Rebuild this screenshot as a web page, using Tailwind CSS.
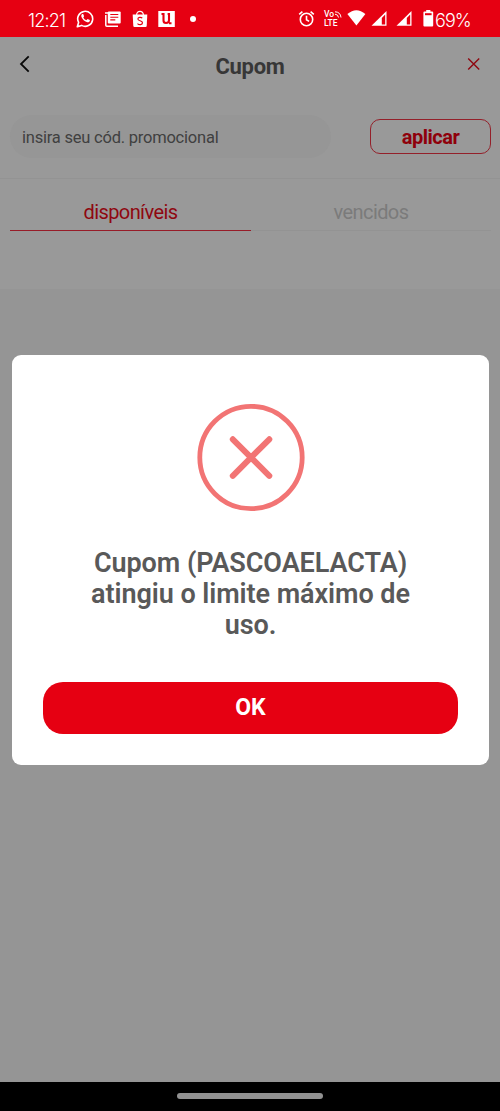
<!DOCTYPE html>
<html lang="pt-BR">
<head>
<meta charset="utf-8">
<title>Cupom</title>
<script src="https://cdn.jsdelivr.net/npm/@tailwindcss/browser@4"></script>
</head>
<body class="bg-[#959595]">
<div class="relative flex flex-col w-[500px] h-[1111px] overflow-hidden bg-[#959595] font-['Roboto',sans-serif]">
  <header class="h-[37px] shrink-0 bg-[#e60012] flex text-white">
    <span class="ml-[28px] mt-[8px] w-[40px] text-[18px] leading-[25px] font-light tracking-[-0.8px] whitespace-nowrap font-['Inter',sans-serif]">12:21</span>
    <svg class="ml-[8px] mt-[9px] w-[19px] h-[19px] shrink-0" viewBox="0 0 19 19" fill="none"><path d="M1.3 17.7l1.3-4.3A7.5 7.5 0 1 1 5.6 16.4z" stroke="#fff" stroke-width="1.6" stroke-linejoin="round"/><path d="M6.3 5.1c-1 .6-1.3 1.800-.7 3.100 1 2.300 2.800 4 5.100 4.900 1.400.5 2.700 0 3.100-1.200l.1-.8-2.300-1.100-1.300 1.200c-1.300-.6-2.300-1.500-3-2.800l.8-1.200-.9-2.200z" fill="#fff"/></svg>
    <svg class="ml-[10px] mt-[11px] w-[16px] h-[16px] shrink-0" viewBox="0 0 16 16"><path d="M.8 4v10.200q0 1 1 1H13M0 2h3" fill="none" stroke="#fff" stroke-width="1.500"/><rect x="2.800" y=".5" width="12.900" height="12" rx="1" fill="#fff"/><path d="M5.300 3.500h8M5.300 6.200h8M5.300 8.900h5" stroke="#e60012" stroke-width="1.100"/></svg>
    <svg class="ml-[11px] mt-[10px] w-[16px] h-[18px] shrink-0" viewBox="0 0 16 18"><path d="M4.600 5C4.600 .2 11.400 .2 11.400 5" fill="none" stroke="#fff" stroke-width="1.200"/><path d="M.7 4.500h14.600l-.6 11.500q-.1 1-1.100 1H2.400q-1 0-1.100-1z" fill="#fff"/><path d="M10.300 8.200C9 6.900 5.900 7.100 5.900 9c0 2.200 4.600 1.400 4.600 3.800 0 2.200-3.500 2.300-5 .8" fill="none" stroke="#e60012" stroke-width="1.200"/></svg>
    <svg class="ml-[10px] mt-[11px] w-[17px] h-[16px] shrink-0" viewBox="0 0 17 16"><rect x=".3" width="16.500" height="16" fill="#fff"/><path d="M3.500 3H6M9.600 3H12M5.500 2v7.500q0 2.500 2.500 2.500 3 0 3-2.700V2M11 12.200h2.500" fill="none" stroke="#e60012" stroke-width="2.100"/></svg>
    <span class="ml-[15px] mt-[16px] w-[6px] h-[6px] rounded-full bg-white shrink-0"></span>
    <svg class="ml-[102px] mt-[10px] w-[17px] h-[17px] shrink-0" viewBox="0 0 17 17" fill="none" stroke="#fff" stroke-width="1.600"><circle cx="8.500" cy="9.500" r="6.200"/><path d="M8.500 5.800v4l2.600 1.600M1.200 4.300l3.200-2.700M15.800 4.300l-3.200-2.700"/></svg>
    <div class="ml-[9px] mt-[11px] w-[18px] shrink-0 flex flex-col text-[8.500px] leading-[8px] font-medium">
      <div class="flex h-[7px]"><span class="w-[11px] tracking-[-0.1px] leading-[7px]">Vo</span><svg class="w-[7px] h-[7px]" viewBox="0 0 7 7" fill="none" stroke="#fff"><path d="M0 .8q5.500.2 6 5.700M0 3.200q3.200.2 3.500 3.300"/></svg></div>
      <span class="h-[9px] leading-[10px]">LTE</span>
    </div>
    <svg class="ml-[5px] mt-[10px] w-[19px] h-[16px] shrink-0" viewBox="0 0 19 16"><path d="M.4 4.100Q9.400-3.600 18.400 4.100L9.400 15.500z" fill="#fff"/></svg>
    <svg class="ml-[5px] mt-[11px] w-[16px] h-[15px] shrink-0" viewBox="0 0 16 15"><path d="M15.500 0v14.700H.5z" fill="#fff"/><path d="M14.200 3.500v10h-3.400V7z" fill="#e60012"/></svg>
    <svg class="ml-[9px] mt-[11px] w-[16px] h-[15px] shrink-0" viewBox="0 0 16 15"><path d="M15.500 0v14.700H.5z" fill="#fff"/><path d="M14.200 3.500v10h-3.400V7z" fill="#e60012"/></svg>
    <svg class="ml-[11px] mt-[10px] w-[11px] h-[17px] shrink-0" viewBox="0 0 11 17"><path d="M3.200 0h4.200v1.500h1.800q1 0 1 1v13q0 1-1 1H1.400q-1 0-1-1v-13q0-1 1-1h1.800z" fill="#fff"/><path d="M2 3.200h6.600v2H2z" fill="#e60012"/></svg>
    <span class="ml-[1px] mt-[8px] text-[18px] leading-[25px] font-light tracking-[-0.9px] whitespace-nowrap font-['Inter',sans-serif]">69%</span>
  </header>

  <main class="h-[252px] shrink-0 bg-[#999999] flex flex-col">
    <div class="h-[60px] grid grid-cols-[60px_1fr_60px]">
      <svg class="ml-[18px] mt-[18px] w-[14px] h-[18px]" viewBox="0 0 14 18" fill="none" stroke="#080808" stroke-width="1.800"><path d="M10.700 1.400L3 9l7.700 7.700"/></svg>
      <h1 class="text-center text-[22px] leading-[60px] font-bold tracking-[-0.3px] text-[#373737]">Cupom</h1>
      <svg class="ml-[27px] mt-[20px] w-[14px] h-[14px]" viewBox="0 0 14 14" fill="none" stroke="#8f0710" stroke-width="1.400"><path d="M1.200 1.500l11 11M12.200 1.500l-11 11"/></svg>
    </div>
    <div class="h-[82px] border-b border-[#939393] flex justify-between pl-[10px] pr-[9px]">
      <div class="mt-[18px] w-[321px] h-[43px] rounded-full bg-[#969696] pl-[12px] text-[16.500px] leading-[45px] tracking-[-0.22px] text-[#404040]">insira seu cód. promocional</div>
      <button class="mt-[22px] w-[121px] h-[35px] rounded-[10px] border border-[#94202a] text-[20px] leading-[32px] font-bold tracking-[-0.5px] text-[#8f000b]">aplicar</button>
    </div>
    <nav class="ml-[10px] h-[52px] grid grid-cols-[241px_1fr] text-center text-[20px] leading-[66px] tracking-[-0.6px] mr-[9px]">
      <div class="h-[52px] border-b border-[#971c28] text-[#8f0710]">disponíveis</div>
      <div class="h-[52px] border-b border-[#939393] text-[#7b7b7b]">vencidos</div>
    </nav>
  </main>

  <footer class="mt-auto h-[29px] bg-black flex justify-center"><span class="mt-[11px] w-[146px] h-[6px] rounded-full bg-[#919191]"></span></footer>

  <section class="absolute left-[12px] top-[355px] w-[477px] h-[410px] rounded-[9px] bg-white flex flex-col items-center">
    <svg class="mt-[48px] w-[108px] h-[109px] shrink-0" viewBox="0 0 108 109" fill="none" stroke="#f27474" stroke-linecap="round"><circle cx="54" cy="54.500" r="51.200" stroke-width="4.800"/><path d="M35.800 36.300l36.500 36.500M72.300 36.300L35.800 72.800" stroke-width="6"/></svg>
    <h2 class="mt-[36px] h-[94px] w-[380px] text-center text-[27px] leading-[31.200px] font-semibold tracking-[-0.060px] text-[#595959]">Cupom (PASCOAELACTA)<br>atingiu o limite máximo de<br>uso.</h2>
    <button class="mt-[40px] w-[415px] h-[52px] shrink-0 rounded-[20px] bg-[#e60012] text-white text-[23px] leading-[52px] font-bold">OK</button>
  </section>
</div>
</body>
</html>
